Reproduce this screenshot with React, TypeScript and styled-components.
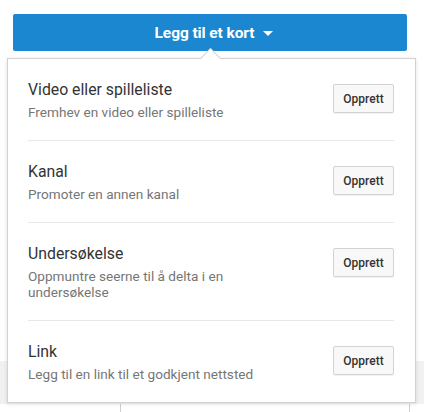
import React from 'react'
import styled, { createGlobalStyle } from 'styled-components'

type Card = {
  title: string
  description: string
}

const cards: Card[] = [
  { title: 'Video eller spilleliste', description: 'Fremhev en video eller spilleliste' },
  { title: 'Kanal', description: 'Promoter en annen kanal' },
  { title: 'Undersøkelse', description: 'Oppmuntre seerne til å delta i en undersøkelse' },
  { title: 'Link', description: 'Legg til en link til et godkjent nettsted' },
]

const App: React.FC = () => (
  <>
    <GlobalStyle />
    <Page>
      <AddButton>
        <AddLabel>Legg til et kort</AddLabel>
        <Caret />
      </AddButton>

      <Backdrop>
        <GreyBand />
        <Columns>
          <SideCell />
          <MainCell />
        </Columns>
      </Backdrop>

      <Menu>
        <Notch />
        {cards.map((card) => (
          <Row key={card.title}>
            <RowText>
              <RowTitle>{card.title}</RowTitle>
              <RowDescription>{card.description}</RowDescription>
            </RowText>
            <CreateButton>Opprett</CreateButton>
          </Row>
        ))}
      </Menu>
    </Page>
  </>
)

const GlobalStyle = createGlobalStyle`
  html, body {
    margin: 0;
    padding: 0;
    background: #fff;
  }
  body {
    font-family: Roboto, "Liberation Sans", Arial, sans-serif;
  }
`

const Page = styled.div`
  position: relative;
  width: 424px;
  height: 412px;
  padding-top: 14px;
  box-sizing: border-box;
  overflow: hidden;
`

const AddButton = styled.button`
  display: flex;
  align-items: center;
  justify-content: center;
  width: 394px;
  height: 37px;
  margin: 0 0 0 13px;
  padding: 0 0 0 8px;
  border: none;
  border-radius: 2px;
  background: #1b87d0;
  color: #fff;
  font-family: Roboto, "Liberation Sans", Arial, sans-serif;
  cursor: pointer;
`

const AddLabel = styled.span`
  font-size: 15.5px;
  font-weight: 700;
  letter-spacing: -0.1px;
`

const Caret = styled.span`
  width: 0;
  height: 0;
  margin-left: 9px;
  margin-top: 1px;
  border-left: 5px solid transparent;
  border-right: 5px solid transparent;
  border-top: 5px solid #fff;
`

const Backdrop = styled.div`
  margin-top: 310px;
`

const GreyBand = styled.div`
  height: 43px;
  background: #f1f1f1;
`

const Columns = styled.div`
  display: flex;
  height: 20px;
`

const SideCell = styled.div`
  width: 120px;
  border-right: 1px solid #cfcfcf;
`

const MainCell = styled.div`
  width: 288px;
  border-right: 1px solid #cfcfcf;
`

const Menu = styled.div`
  position: absolute;
  top: 58px;
  left: 7px;
  width: 409px;
  box-sizing: border-box;
  padding: 0 21px 0 20px;
  background: #fff;
  border: 1px solid #d2d2d2;
  box-shadow: 0 1px 4px rgba(0, 0, 0, 0.12);
`

const Notch = styled.div`
  position: absolute;
  top: -8px;
  left: 195px;
  width: 14px;
  height: 14px;
  background: #fff;
  border-top: 1px solid #d2d2d2;
  border-left: 1px solid #d2d2d2;
  transform: rotate(45deg);
`

const Row = styled.div`
  position: relative;
  display: flex;
  align-items: flex-start;
  justify-content: space-between;
  padding: 21px 0 20px;
  border-bottom: 1px solid #e8e8e8;

  &:last-child {
    border-bottom: none;
  }
`

const RowText = styled.div`
  display: flex;
  flex-direction: column;
  gap: 4px;
  max-width: 260px;
`

const RowTitle = styled.div`
  font-size: 15.8px;
  line-height: 20px;
  color: #333;
`

const RowDescription = styled.div`
  font-size: 13.6px;
  line-height: 16px;
  color: #767676;
`

const CreateButton = styled.button`
  width: 61px;
  height: 29px;
  margin-top: 4px;
  padding: 0;
  border: 1px solid #d3d3d3;
  border-radius: 2px;
  background: #f8f8f8;
  box-shadow: 0 1px 0 rgba(0, 0, 0, 0.05);
  color: #333;
  font-family: Roboto, "Liberation Sans", Arial, sans-serif;
  font-size: 12px;
  font-weight: 500;
  cursor: pointer;
`

export default App
